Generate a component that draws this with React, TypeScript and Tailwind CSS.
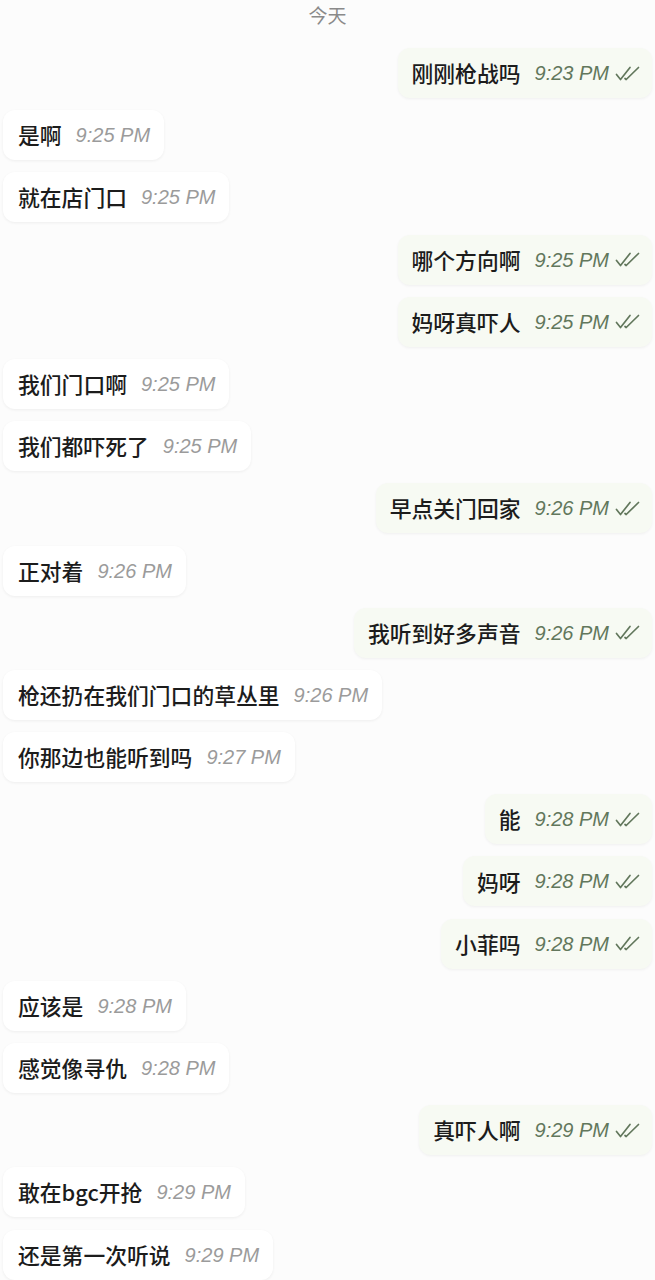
import React from "react";

type Msg = { out: boolean; text: string; time: string };

const msgs: Msg[] = [
  { out: true, text: "刚刚枪战吗", time: "9:23 PM" },
  { out: false, text: "是啊", time: "9:25 PM" },
  { out: false, text: "就在店门口", time: "9:25 PM" },
  { out: true, text: "哪个方向啊", time: "9:25 PM" },
  { out: true, text: "妈呀真吓人", time: "9:25 PM" },
  { out: false, text: "我们门口啊", time: "9:25 PM" },
  { out: false, text: "我们都吓死了", time: "9:25 PM" },
  { out: true, text: "早点关门回家", time: "9:26 PM" },
  { out: false, text: "正对着", time: "9:26 PM" },
  { out: true, text: "我听到好多声音", time: "9:26 PM" },
  { out: false, text: "枪还扔在我们门口的草丛里", time: "9:26 PM" },
  { out: false, text: "你那边也能听到吗", time: "9:27 PM" },
  { out: true, text: "能", time: "9:28 PM" },
  { out: true, text: "妈呀", time: "9:28 PM" },
  { out: true, text: "小菲吗", time: "9:28 PM" },
  { out: false, text: "应该是", time: "9:28 PM" },
  { out: false, text: "感觉像寻仇", time: "9:28 PM" },
  { out: true, text: "真吓人啊", time: "9:29 PM" },
  { out: false, text: "敢在bgc开抢", time: "9:29 PM" },
  { out: false, text: "还是第一次听说", time: "9:29 PM" },
];

function Ticks() {
  return (
    <svg width="25" height="15" viewBox="0 0 25 15" fill="none" className="ml-[6px] shrink-0">
      <path d="M1.5 8.5 L5.5 13.5 L15 1.5" stroke="#62775c" strokeWidth="1.7" strokeLinecap="round" strokeLinejoin="round" />
      <path d="M10 12.5 L11.2 13.5 L23.5 1.5" stroke="#62775c" strokeWidth="1.7" strokeLinecap="round" strokeLinejoin="round" />
    </svg>
  );
}

function Bubble({ m }: { m: Msg }) {
  return (
    <div className={m.out ? "flex justify-end" : "flex justify-start"}>
      <div
        className={
          m.out
            ? "mr-[3px] flex h-[50px] items-center rounded-[12px] bg-[#f7faf3] pl-[14px] pr-[12px] shadow-[0_1px_3px_rgba(0,0,0,0.05)]"
            : "ml-[3px] flex h-[50px] items-center rounded-[12px] bg-white pl-[15px] pr-[14px] shadow-[0_1px_3px_rgba(0,0,0,0.06)]"
        }
      >
        <span className="text-[21.8px] font-medium leading-none text-[#1c1c1c] [font-family:'Noto_Sans_CJK_SC','Liberation_Sans',sans-serif]">
          {m.text}
        </span>
        <span
          className={
            "ml-[14px] text-[20px] italic leading-none [font-family:'Liberation_Sans',Arial,sans-serif] " +
            (m.out ? "text-[#62775c]" : "text-[#9b9b9b]")
          }
        >
          {m.time}
        </span>
        {m.out && <Ticks />}
      </div>
    </div>
  );
}

export default function App() {
  return (
    <div className="h-[1280px] w-[655px] overflow-hidden bg-[#fcfcfc]">
      <div className="flex h-[30px] items-center justify-center text-[19px] text-[#8a8a8a] [font-family:'Noto_Sans_CJK_SC',sans-serif]">
        今天
      </div>
      <div className="flex flex-col gap-[12.2px] pt-[18px]">
        {msgs.map((m, i) => (
          <Bubble key={i} m={m} />
        ))}
      </div>
    </div>
  );
}
